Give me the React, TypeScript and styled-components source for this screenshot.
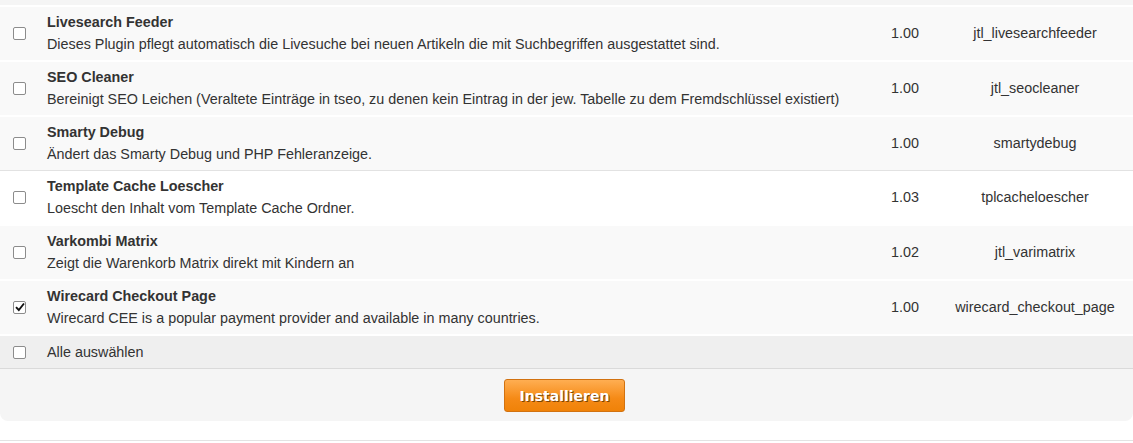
import React, { useState } from "react";
import styled, { createGlobalStyle } from "styled-components";

const Global = createGlobalStyle`
  html, body { margin: 0; padding: 0; background: #fff; }
  body { font-family: "Liberation Sans", Arial, sans-serif; font-size: 14.35px; color: #333; }
`;

const Page = styled.div`
  width: 1133px;
`;

const Panel = styled.div`
  background: #f5f5f5;
  padding-top: 5px;
  border-radius: 0 0 8px 8px;
`;

const Row = styled.div<{ $white?: boolean }>`
  display: grid;
  grid-template-columns: 39px 1fr 64px 196px;
  align-items: center;
  min-height: 53px;
  background: ${(p) => (p.$white ? "#ffffff" : "#f9f9f9")};
  border-top: ${(p) => (p.$white ? "1px solid #e2e2e2" : "2px solid #ffffff")};
  border-bottom: ${(p) => (p.$white ? "1px solid #e2e2e2" : "0")};
  margin-bottom: ${(p) => (p.$white ? "-1px" : "0")};
`;

const CheckCell = styled.div`
  display: flex;
  justify-content: flex-start;
  padding-left: 13px;
  align-items: center;
`;

const NameCell = styled.div`
  padding: 6px 8px 7px 8px;
`;

const Title = styled.div`
  font-weight: bold;
  line-height: 18px;
`;

const Desc = styled.div`
  margin-top: 4px;
  line-height: 18px;
`;

const Center = styled.div`
  text-align: center;
  padding: 0 8px;
  margin-top: -1px;
  white-space: nowrap;
`;

const AllRow = styled.div`
  display: grid;
  grid-template-columns: 39px 1fr;
  align-items: center;
  height: 32px;
  background: #efefef;
  border-top: 2px solid #ffffff;
  border-bottom: 1px solid #dadada;
`;

const AllLabel = styled.div`
  padding: 0 8px;
  line-height: 18px;
`;

const Footer = styled.div`
  display: flex;
  justify-content: center;
  padding: 10px 0 9px;
  padding-right: 4px;
`;

const Button = styled.button`
  width: 121px;
  height: 33px;
  border: 1px solid #d27210;
  border-radius: 3px;
  background: linear-gradient(to bottom, #ffae52 0%, #f58a16 60%, #f08208 100%);
  color: #fff;
  font-family: "DejaVu Sans", sans-serif;
  font-weight: bold;
  font-size: 14px;
  text-shadow: 1px 1px 0 #7d4405;
  cursor: pointer;
  padding: 0;
`;

const Separator = styled.div`
  margin-top: 19px;
  border-top: 1px solid #e3e3e3;
  height: 2px;
`;

const BoxWrap = styled.label`
  position: relative;
  display: inline-block;
  width: 13px;
  height: 13px;
  cursor: pointer;
`;

const HiddenInput = styled.input`
  position: absolute;
  opacity: 0;
  margin: 0;
  width: 13px;
  height: 13px;
`;

const Box = styled.span`
  display: block;
  box-sizing: border-box;
  width: 13px;
  height: 13px;
  border: 1px solid #8c8c8c;
  border-radius: 2px;
  background: #fff;
  position: relative;
`;

const CheckSvg = styled.svg`
  position: absolute;
  left: 1px;
  top: 0px;
`;

function Checkbox({ checked, onChange }: { checked: boolean; onChange: () => void }) {
  return (
    <BoxWrap>
      <HiddenInput type="checkbox" checked={checked} onChange={onChange} />
      <Box>
        {checked && (
          <CheckSvg width="10" height="10" viewBox="0 0 10 10">
            <path d="M1 5.2 L3.8 8 L9 1.5" fill="none" stroke="#111" strokeWidth="1.9" />
          </CheckSvg>
        )}
      </Box>
    </BoxWrap>
  );
}

const plugins = [
  { title: "Livesearch Feeder", desc: "Dieses Plugin pflegt automatisch die Livesuche bei neuen Artikeln die mit Suchbegriffen ausgestattet sind.", version: "1.00", dir: "jtl_livesearchfeeder" },
  { title: "SEO Cleaner", desc: "Bereinigt SEO Leichen (Veraltete Einträge in tseo, zu denen kein Eintrag in der jew. Tabelle zu dem Fremdschlüssel existiert)", version: "1.00", dir: "jtl_seocleaner" },
  { title: "Smarty Debug", desc: "Ändert das Smarty Debug und PHP Fehleranzeige.", version: "1.00", dir: "smartydebug" },
  { title: "Template Cache Loescher", desc: "Loescht den Inhalt vom Template Cache Ordner.", version: "1.03", dir: "tplcacheloescher", white: true },
  { title: "Varkombi Matrix", desc: "Zeigt die Warenkorb Matrix direkt mit Kindern an", version: "1.02", dir: "jtl_varimatrix" },
  { title: "Wirecard Checkout Page", desc: "Wirecard CEE is a popular payment provider and available in many countries.", version: "1.00", dir: "wirecard_checkout_page" },
];

export default function App() {
  const [checked, setChecked] = useState<boolean[]>([false, false, false, false, false, true]);
  const [all, setAll] = useState(false);
  const toggle = (i: number) => setChecked((c) => c.map((v, j) => (j === i ? !v : v)));
  return (
    <Page>
      <Global />
      <Panel>
        {plugins.map((p, i) => (
          <Row key={p.dir} $white={p.white}>
            <CheckCell>
              <Checkbox checked={checked[i]} onChange={() => toggle(i)} />
            </CheckCell>
            <NameCell>
              <Title>{p.title}</Title>
              <Desc>{p.desc}</Desc>
            </NameCell>
            <Center>{p.version}</Center>
            <Center>{p.dir}</Center>
          </Row>
        ))}
        <AllRow>
          <CheckCell>
            <Checkbox checked={all} onChange={() => setAll(!all)} />
          </CheckCell>
          <AllLabel>Alle auswählen</AllLabel>
        </AllRow>
        <Footer>
          <Button>Installieren</Button>
        </Footer>
      </Panel>
      <Separator />
    </Page>
  );
}
